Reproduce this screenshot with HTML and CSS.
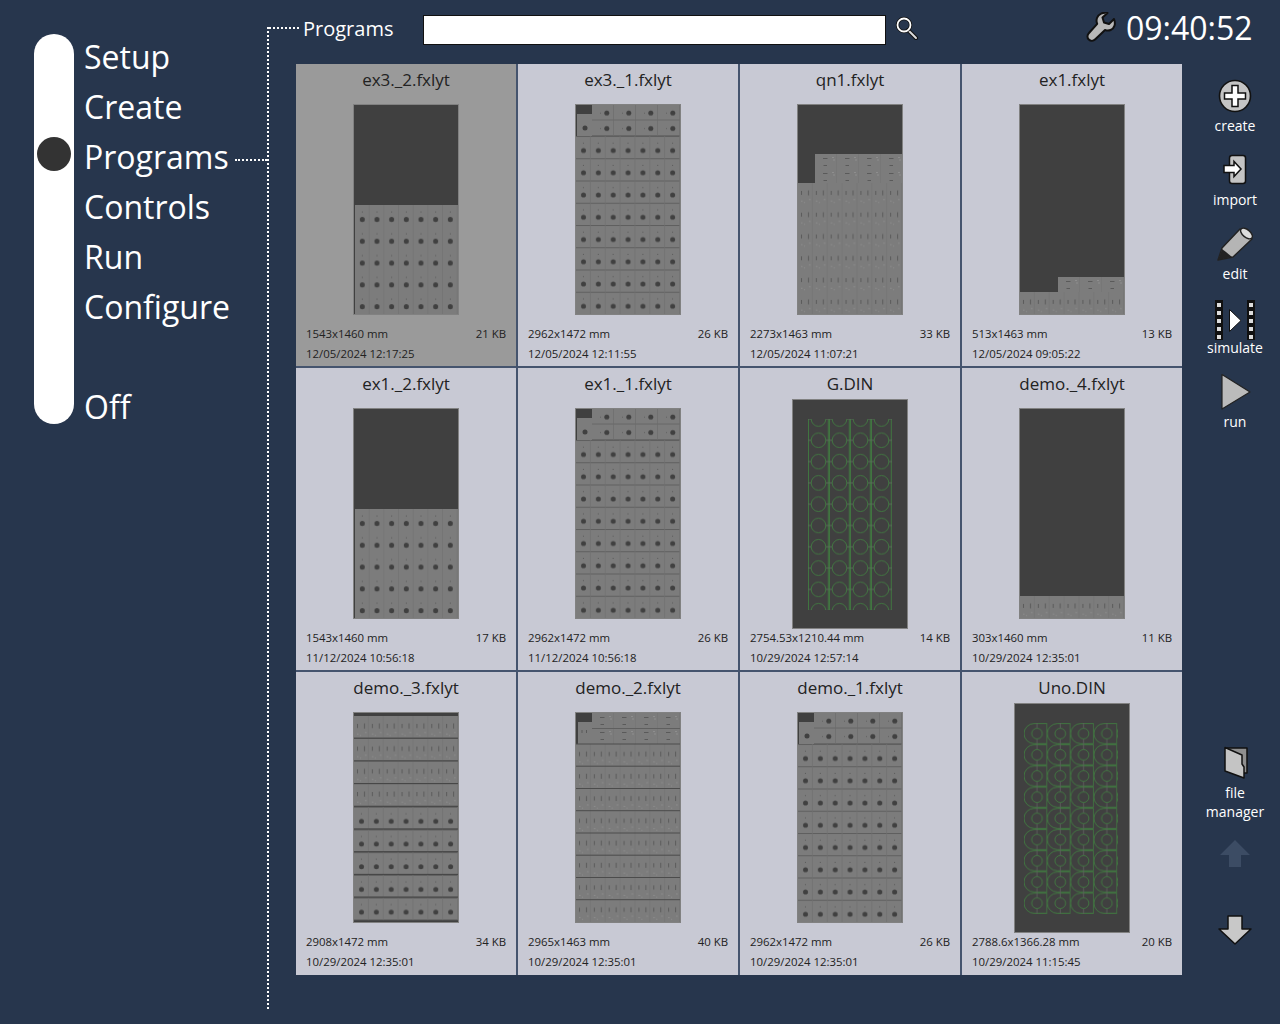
FILE: index.html
```html
<!DOCTYPE html>
<html lang="en">
<head>
  <meta charset="UTF-8" />
  <title>Programs</title>
  <link rel="stylesheet" href="styles.css">
</head>
<body>
  <div class="app">
    <aside class="side">
      <div class="pill"><div class="knob"></div></div>
      <nav class="menu">
        <div class="menu-item">Setup</div>
        <div class="menu-item">Create</div>
        <div class="menu-item">Programs<span class="menu-leader"></span></div>
        <div class="menu-item">Controls</div>
        <div class="menu-item">Run</div>
        <div class="menu-item">Configure</div>
        <div class="menu-item menu-off">Off</div>
      </nav>
    </aside>
    <div class="vline"></div>
    <main class="main">
      <header class="top">
        <span class="top-leader"></span>
        <span class="top-title">Programs</span>
        <input class="search" type="text" />
        <svg class="search-icon" width="24" height="24" viewBox="0 0 24 24">
          <path d="M13 14l8 8" stroke="#111" stroke-width="4" stroke-linecap="round"/>
          <path d="M13 14l8 8" stroke="#ddd" stroke-width="2" stroke-linecap="round"/>
          <circle cx="9" cy="9" r="6.500" fill="none" stroke="#111" stroke-width="3.400"/>
          <circle cx="9" cy="9" r="6.500" fill="none" stroke="#fff" stroke-width="1.800"/>
        </svg>
        <svg class="wrench" width="30" height="30" viewBox="0 0 30 30">
          <path transform="translate(0 1)" d="M28 6l-5 5-5-1.500-1.500-5 5-4.500c-4.500-1-9 1-10.500 5-.7 2-.6 4 .2 5.800L3 20c-2 2-2 4.700-.2 6.500 1.800 1.800 4.500 1.700 6.500-.3L19 17c1.800.7 3.800.8 5.600 0 3.700-1.500 5.400-6 3.400-11z" fill="#b9b9b9" stroke="#111" stroke-width="2" stroke-linejoin="round"/>
        </svg>
        <span class="clock">09:40:52</span>
      </header>
      <div class="content">
        <section class="grid">
          <article class="card card-selected">
            <div class="card-title">ex3._2.fxlyt</div>
            <div class="card-thumb"><svg class="thumb" viewBox="0 0 104 209"><use href="#t-half"/></svg></div>
            <div class="card-meta"><span>1543x1460 mm</span><span>21 KB</span></div>
            <div class="card-meta"><span>12/05/2024 12:17:25</span></div>
          </article>
          <article class="card">
            <div class="card-title">ex3._1.fxlyt</div>
            <div class="card-thumb"><svg class="thumb" viewBox="0 0 104 209"><use href="#t-full"/></svg></div>
            <div class="card-meta"><span>2962x1472 mm</span><span>26 KB</span></div>
            <div class="card-meta"><span>12/05/2024 12:11:55</span></div>
          </article>
          <article class="card">
            <div class="card-title">qn1.fxlyt</div>
            <div class="card-thumb"><svg class="thumb" viewBox="0 0 104 209"><use href="#t-qn1"/></svg></div>
            <div class="card-meta"><span>2273x1463 mm</span><span>33 KB</span></div>
            <div class="card-meta"><span>12/05/2024 11:07:21</span></div>
          </article>
          <article class="card">
            <div class="card-title">ex1.fxlyt</div>
            <div class="card-thumb"><svg class="thumb" viewBox="0 0 104 209"><use href="#t-ex1"/></svg></div>
            <div class="card-meta"><span>513x1463 mm</span><span>13 KB</span></div>
            <div class="card-meta"><span>12/05/2024 09:05:22</span></div>
          </article>

          <article class="card">
            <div class="card-title">ex1._2.fxlyt</div>
            <div class="card-thumb"><svg class="thumb" viewBox="0 0 104 209"><use href="#t-half"/></svg></div>
            <div class="card-meta"><span>1543x1460 mm</span><span>17 KB</span></div>
            <div class="card-meta"><span>11/12/2024 10:56:18</span></div>
          </article>
          <article class="card">
            <div class="card-title">ex1._1.fxlyt</div>
            <div class="card-thumb"><svg class="thumb" viewBox="0 0 104 209"><use href="#t-full"/></svg></div>
            <div class="card-meta"><span>2962x1472 mm</span><span>26 KB</span></div>
            <div class="card-meta"><span>11/12/2024 10:56:18</span></div>
          </article>
          <article class="card">
            <div class="card-title">G.DIN</div>
            <div class="card-thumb"><svg class="thumb thumb-din" viewBox="0 0 114 228"><use href="#t-g"/></svg></div>
            <div class="card-meta"><span>2754.53x1210.44 mm</span><span>14 KB</span></div>
            <div class="card-meta"><span>10/29/2024 12:57:14</span></div>
          </article>
          <article class="card">
            <div class="card-title">demo._4.fxlyt</div>
            <div class="card-thumb"><svg class="thumb" viewBox="0 0 104 209"><use href="#t-demo4"/></svg></div>
            <div class="card-meta"><span>303x1460 mm</span><span>11 KB</span></div>
            <div class="card-meta"><span>10/29/2024 12:35:01</span></div>
          </article>

          <article class="card">
            <div class="card-title">demo._3.fxlyt</div>
            <div class="card-thumb"><svg class="thumb" viewBox="0 0 104 209"><use href="#t-demo3"/></svg></div>
            <div class="card-meta"><span>2908x1472 mm</span><span>34 KB</span></div>
            <div class="card-meta"><span>10/29/2024 12:35:01</span></div>
          </article>
          <article class="card">
            <div class="card-title">demo._2.fxlyt</div>
            <div class="card-thumb"><svg class="thumb" viewBox="0 0 104 209"><use href="#t-demo2"/></svg></div>
            <div class="card-meta"><span>2965x1463 mm</span><span>40 KB</span></div>
            <div class="card-meta"><span>10/29/2024 12:35:01</span></div>
          </article>
          <article class="card">
            <div class="card-title">demo._1.fxlyt</div>
            <div class="card-thumb"><svg class="thumb" viewBox="0 0 104 209"><use href="#t-full"/></svg></div>
            <div class="card-meta"><span>2962x1472 mm</span><span>26 KB</span></div>
            <div class="card-meta"><span>10/29/2024 12:35:01</span></div>
          </article>
          <article class="card">
            <div class="card-title">Uno.DIN</div>
            <div class="card-thumb"><svg class="thumb thumb-din" viewBox="0 0 114 228"><use href="#t-uno"/></svg></div>
            <div class="card-meta"><span>2788.6x1366.28 mm</span><span>20 KB</span></div>
            <div class="card-meta"><span>10/29/2024 11:15:45</span></div>
          </article>
        </section>

        <aside class="tools">
          <div class="tool">
            <svg width="36" height="36" viewBox="0 0 36 36">
              <circle cx="18" cy="18" r="15.500" fill="#c4c4c4" stroke="#111" stroke-width="1.600"/>
              <path d="M15 7.500h6v7.500h7.500v6H21v7.500h-6V21H7.500v-6H15z" fill="#fff" stroke="#111" stroke-width="1.500"/>
            </svg>
            <span>create</span>
          </div>
          <div class="tool">
            <svg width="36" height="36" viewBox="0 0 36 36">
              <rect x="12.500" y="3.500" width="16" height="28" rx="2.500" fill="#c4c4c4" stroke="#111" stroke-width="1.500"/>
              <path d="M7 14h10v-4l7 7.500-7 7.500v-4H7z" fill="#fff" stroke="#111" stroke-width="1.500" transform="translate(0 -.5)"/>
            </svg>
            <span>import</span>
          </div>
          <div class="tool">
            <svg width="36" height="36" viewBox="0 0 36 36">
              <path d="M1 34l4-12L23 3l12 10-19 18z" fill="#b5b5b5" stroke="#222" stroke-width="1.400" stroke-linejoin="round"/>
              <path d="M1 34l4-11 4 3 6 5z" fill="#222"/>
              <ellipse cx="29.500" cy="7.500" rx="7" ry="3.800" transform="rotate(40 29.500 7.500)" fill="#ddd" stroke="#222" stroke-width="1.400"/>
            </svg>
            <span>edit</span>
          </div>
          <div class="tool">
            <svg width="42" height="42" viewBox="0 0 42 42" class="tool-tall">
              <rect x="0" y="0" width="8" height="40" fill="#111"/>
              <rect x="32" y="0" width="8" height="40" fill="#111"/>
              <path d="M2 3h4v4H2zM2 11h4v4H2zM2 19h4v4H2zM2 27h4v4H2zM2 35h4v4H2zM34 3h4v4h-4zM34 11h4v4h-4zM34 19h4v4h-4zM34 27h4v4h-4zM34 35h4v4h-4z" fill="#ddd"/>
              <path d="M14.500 9.500L26 20.500 14.500 31.500z" fill="#fff" stroke="#111"/>
            </svg>
            <span>simulate</span>
          </div>
          <div class="tool">
            <svg width="36" height="36" viewBox="0 0 36 36">
              <path d="M5 .5L33 18 5 35z" fill="#bbb" stroke="#222" stroke-width="1.200" stroke-linejoin="round"/>
            </svg>
            <span>run</span>
          </div>

          <div class="tools-bottom">
            <div class="tool tool-file">
              <svg width="36" height="36" viewBox="0 0 36 36">
                <path d="M10 3h20v25h-4z" fill="#8f8f8f" stroke="#111" stroke-width="1.500" stroke-linejoin="round"/>
                <path d="M8 2.500l17 7.500v9l2 3v11L8 26z" fill="#c4c4c4" stroke="#111" stroke-width="1.500" stroke-linejoin="round"/>
              </svg>
              <span>file<br>manager</span>
            </div>
            <svg class="arrow" width="32" height="30" viewBox="0 0 32 30">
              <path d="M16 1l15 15h-9v12H10V16H1z" fill="#3c4c64"/>
            </svg>
            <svg class="arrow arrow-down" width="34" height="30" viewBox="0 0 34 30">
              <path d="M10 1h14v13h9L17 29 1 14h9z" fill="#c8c8c8" stroke="#111" stroke-width="1.500" stroke-linejoin="round"/>
            </svg>
          </div>
        </aside>
      </div>
    </main>
  </div>

  <!-- shared artwork for the thumbnails -->
  <svg class="defs">
    <defs>
      <pattern id="dot" patternUnits="userSpaceOnUse" width="14.86" height="22.25">
        <rect width="14.86" height="22.25" fill="#7c7c7c"/>
        <rect width="14.86" height="1" fill="#5f5f5f"/>
        <rect x="14.200" width=".7" height="22.25" fill="#6f6f6f"/>
        <circle cx="7.500" cy="14.500" r="2.500" fill="#404040"/>
        <circle cx="7.500" cy="7" r=".5" fill="#4a4a4a"/>
      </pattern>
      <pattern id="dot-half" patternUnits="userSpaceOnUse" width="14.67" height="21.800">
        <rect width="14.67" height="21.800" fill="#7c7c7c"/>
        <rect x="14" width=".7" height="21.800" fill="#727272"/>
        <circle cx="7.300" cy="14.500" r="2.500" fill="#404040"/>
        <circle cx="7.300" cy="7" r=".5" fill="#4a4a4a"/>
      </pattern>
      <pattern id="dot-wide" href="#dot" height="22.700"/>
      <pattern id="mark" patternUnits="userSpaceOnUse" width="14.86" height="22.25">
        <rect width="14.86" height="22.25" fill="#7c7c7c"/>
        <rect x="14.200" width=".7" height="22.25" fill="#737373"/>
        <path d="M3.500 8v4M10.500 7.500v5" stroke="#5a5a5a" stroke-width="1"/>
        <path d="M3 18h1.500M11 16.500h1.500M6 19.500h1" stroke="#8e8e8e" stroke-width="1"/>
      </pattern>
      <pattern id="mark-half" href="#mark" height="21.800"/>
      <pattern id="mark-wide" href="#mark" height="22.700"/>
      <pattern id="top-dot" patternUnits="userSpaceOnUse" width="22" height="15.500">
        <rect width="22" height="15.500" fill="#7c7c7c"/>
        <rect y="14.800" width="22" height=".7" fill="#5f5f5f"/>
        <rect x="21.400" width=".6" height="15.500" fill="#6a6a6a"/>
        <circle cx="14.800" cy="8" r="2.500" fill="#404040"/>
        <circle cx="8.500" cy="8" r=".5" fill="#555"/>
      </pattern>
      <pattern id="top-mark" patternUnits="userSpaceOnUse" width="22" height="15">
        <rect width="22" height="15" fill="#7c7c7c"/>
        <rect x="21.500" width=".5" height="15" fill="#727272"/>
        <path d="M8 4.500h4.500M8.500 11.500h3.500" stroke="#5a5a5a" stroke-width="1"/>
        <path d="M17 3.500h2M18 6h2" stroke="#8e8e8e" stroke-width="1"/>
      </pattern>
      <pattern id="din-g" patternUnits="userSpaceOnUse" width="21" height="21.300">
        <path d="M.5 0v21.300M20.300 0v21.300" stroke="#3f7a3f" stroke-width=".9" fill="none"/>
        <path d="M0 0h3M18 0h3M0 21.300h3M18 21.300h3" stroke="#5b6d5b" stroke-width=".9" fill="none"/>
        <circle cx="10.500" cy="0" r="7.300" fill="none" stroke="#3f7a3f" stroke-width=".9"/>
        <circle cx="10.500" cy="21.300" r="7.300" fill="none" stroke="#3f7a3f" stroke-width=".9"/>
      </pattern>
      <pattern id="din-uno" patternUnits="userSpaceOnUse" width="23.300" height="21.200">
        <path d="M10 .6h13v20H10A10 10 0 0 1 10 .6z" fill="none" stroke="#3f7a3f" stroke-width=".9"/>
        <path d="M13 0v5M13 16v5" stroke="#5c5c5c" stroke-width=".9"/>
        <circle cx="13" cy="10.600" r="5.300" fill="none" stroke="#3f7a3f" stroke-width=".9"/>
      </pattern>

      <g id="t-half">
        <g transform="translate(1 100)"><rect width="103" height="109" fill="url(#dot-half)"/></g>
      </g>
      <g id="t-full">
        <g transform="translate(16 0)"><rect width="88" height="31" fill="url(#top-dot)"/></g>
        <rect x="1" y="9" width="15" height="22" fill="#7c7c7c"/>
        <circle cx="9" cy="23" r="2.500" fill="#404040"/>
        <g transform="translate(0 31)"><rect width="104" height="178" fill="url(#dot)"/></g>
      </g>
      <g id="t-qn1">
        <g transform="translate(17 49)"><rect width="87" height="29" fill="url(#top-mark)"/></g>
        <g transform="translate(0 78)"><rect width="104" height="131" fill="url(#mark-half)"/></g>
      </g>
      <g id="t-ex1">
        <g transform="translate(38 172)"><rect width="66" height="15" fill="url(#top-mark)"/></g>
        <g transform="translate(0 187)"><rect width="104" height="22" fill="url(#mark-half)"/></g>
      </g>
      <g id="t-demo4">
        <g transform="translate(0 187)"><rect width="104" height="22" fill="url(#mark-half)"/></g>
      </g>
      <g id="t-demo3">
        <g transform="translate(0 3)"><rect width="104" height="90.800" fill="url(#mark-wide)"/></g>
        <g transform="translate(0 93.800)"><rect width="104" height="113.500" fill="url(#dot-wide)"/></g>
        <path d="M0 25.200h104M0 47.900h104M0 70.600h104M0 93.300h104M0 116h104M0 138.700h104M0 161.400h104M0 184.100h104" stroke="#454545" stroke-width="1"/>
      </g>
      <g id="t-demo2">
        <g transform="translate(16 0)"><rect width="88" height="31" fill="url(#top-mark)"/></g>
        <rect x="2" y="9" width="14" height="22" fill="#7c7c7c"/>
        <path d="M6 17v3M10.500 17v3" stroke="#5a5a5a"/>
        <path d="M16 15.500h88" stroke="#5f5f5f"/>
        <g transform="translate(0 31)"><rect width="104" height="178" fill="url(#mark)"/></g>
        <path d="M0 31h104M0 53.200h104M0 75.500h104M0 97.700h104M0 120h104M0 142.200h104M0 164.500h104M0 186.700h104" stroke="#4c4c4c" stroke-width="1"/>
      </g>
      <g id="t-g">
        <g transform="translate(15 19)"><rect width="84" height="191" fill="url(#din-g)"/></g>
      </g>
      <g id="t-uno">
        <g transform="translate(9 19)"><rect width="94" height="191" fill="url(#din-uno)"/></g>
      </g>
    </defs>
  </svg>
</body>
</html>
```

FILE: styles.css
```css
html, body { margin: 0; padding: 0; }
body { background: #27364d; color: #fff; font-family: "Open Sans", sans-serif; }

.app { display: flex; width: 1280px; height: 1024px; overflow: hidden; }

/* left menu */
.side { display: flex; width: 267px; padding: 32px 0 0 34px; box-sizing: border-box; }
.pill { position: relative; flex: none; width: 40px; height: 390px; margin-top: 2px; border-radius: 20px; background: #fff; }
.knob { position: absolute; top: 103px; left: 3px; width: 34px; height: 34px; border-radius: 50%; background: #333; }
.menu { flex: 1; margin-left: 10px; }
.menu-item { display: flex; align-items: center; height: 50px; font-size: 32px; line-height: 50px; }
.menu-leader { flex: 1; height: 0; margin: 5px 0 0 6px; border-top: 2px dotted #fff; }
.menu-off { margin-top: 50px; }

.vline { flex: none; width: 0; height: 982px; margin-top: 27px; border-left: 2px dotted #fff; }

/* header */
.main { flex: 1; display: flex; flex-direction: column; }
.top { display: flex; align-items: center; height: 58px; padding-bottom: 6px; }
.top-leader { align-self: flex-start; width: 30px; height: 0; margin-top: 27px; border-top: 2px dotted #fff; }
.top-title { margin: -2px 0 0 4px; width: 120px; font-size: 20px; }
.search { width: 463px; height: 30px; margin-top: 2px; box-sizing: border-box; padding: 0 4px; border: 1px solid #111; background: #fff; }
.search-icon { margin: -2px 0 0 9px; }
.wrench { margin: -4px 0 0 167px; }
.clock { margin: -3px 0 0 10px; font-size: 32px; }

/* program grid */
.content { display: flex; margin-left: 27px; height: 911px; }
.grid { display: grid; grid-template-columns: repeat(4, 220px); grid-template-rows: 302px 302px 303px; gap: 2px; width: 886px; background: #45546e; }
.card { display: flex; flex-direction: column; padding: 0 10px; background: #c8c9d4; color: #222; overflow: hidden; }
.card-selected { background: #9a9a9a; }
.card-title { height: 31px; font-size: 17px; line-height: 32px; text-align: center; }
.card-thumb { display: flex; justify-content: center; align-items: center; height: 229px; }
.thumb { flex: none; width: 106px; height: 211px; box-sizing: border-box; border: 1px solid #818181; background: #404040; }
.thumb-din { width: 116px; height: 230px; }
.card-meta { display: flex; justify-content: space-between; font-size: 11.4px; line-height: 20px; white-space: nowrap; }

/* right toolbar */
.tools { display: flex; flex-direction: column; align-items: center; width: 90px; margin-left: 8px; padding-top: 14px; }
.tool { display: flex; flex-direction: column; align-items: center; height: 74px; font-size: 14px; line-height: 19px; text-align: center; }
.tool svg { flex: none; height: 36px; }
.tool svg.tool-tall { height: 42px; margin: 0 0 -6px 2px; width: 42px; }
.tool span { margin-top: 2px; }
.tools-bottom { display: flex; flex-direction: column; align-items: center; margin-top: auto; padding-bottom: 30px; }
.tool-file { height: auto; }
.arrow { margin-top: 18px; }
.arrow-down { margin-top: 46px; }

.defs { display: block; width: 0; height: 0; }
```
